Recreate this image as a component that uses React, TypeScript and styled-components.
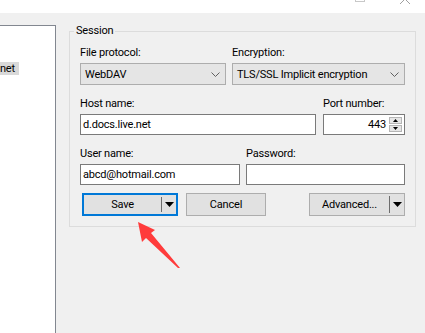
import React from "react";
import styled, { createGlobalStyle } from "styled-components";

const FONT = `Roboto, "Noto Sans", sans-serif`;

const GlobalStyle = createGlobalStyle`
  html, body {
    margin: 0;
    padding: 0;
  }
  body {
    width: 425px;
    height: 333px;
    overflow: hidden;
    background: #f0f0f0;
    font-family: ${FONT};
    font-size: 11px;
    letter-spacing: -0.2px;
    color: #000;
  }
`;

const Window = styled.div`
  position: relative;
  width: 425px;
  height: 333px;
  display: flex;
  flex-direction: column;
  overflow: hidden;
`;

const TitleBar = styled.div`
  height: 14px;
  background: #fff;
  display: flex;
  justify-content: flex-end;
  align-items: flex-start;
  gap: 35px;
  padding-right: 15px;
  overflow: hidden;
`;

const CaptionGlyph = styled.svg<{ $lift: number }>`
  width: 10px;
  height: 10px;
  margin-top: -${({ $lift }) => $lift}px;
  flex: none;
`;

const Body = styled.div`
  flex: 1;
  display: flex;
  align-items: flex-start;
  background: #f0f0f0;
`;

const TreePanel = styled.div`
  width: 55px;
  height: 307px;
  margin-top: 12px;
  background: #fff;
  border-top: 1px solid #828790;
  border-right: 1px solid #828790;
  overflow: hidden;
  flex: none;
`;

const TreeItem = styled.div`
  display: inline-block;
  margin-top: 36px;
  padding: 0 4px 0 0;
  line-height: 13px;
  background: #d9d9d9;
  white-space: nowrap;
`;

const GroupBox = styled.fieldset`
  width: 347px;
  box-sizing: border-box;
  margin: 10px 0 0 13px;
  padding: 6px 10px 10px 10px;
  border: 1px solid #dcdcdc;
  min-width: 0;
  flex: none;
`;

const Legend = styled.legend`
  padding: 0 2px;
  margin-left: -6px;
  line-height: 16px;
`;

const Row = styled.div<{ $cols: string; $gap: number; $mb: number }>`
  display: grid;
  grid-template-columns: ${({ $cols }) => $cols};
  column-gap: ${({ $gap }) => $gap}px;
  margin-bottom: ${({ $mb }) => $mb}px;
`;

const Field = styled.div`
  display: flex;
  flex-direction: column;
  min-width: 0;
`;

const Label = styled.label`
  line-height: 16px;
  margin-bottom: 2px;
  white-space: nowrap;
`;

const Combo = styled.div`
  height: 22px;
  box-sizing: border-box;
  border: 1px solid #adadad;
  background: #e5e5e5;
  display: flex;
  align-items: center;
  padding: 0 5px 0 4px;
  white-space: nowrap;
`;

const ComboText = styled.span`
  flex: 1;
`;

const TextBox = styled.div<{ $align?: string }>`
  height: 21px;
  box-sizing: border-box;
  border: 1px solid #7a7a7a;
  background: #fff;
  display: flex;
  align-items: center;
  justify-content: ${({ $align }) => ($align === "right" ? "flex-end" : "flex-start")};
  padding: 0 2px;
  white-space: nowrap;
`;

const SpinStack = styled.div`
  display: flex;
  flex-direction: column;
  margin-left: 3px;
`;

const SpinPart = styled.div`
  width: 13px;
  height: 7px;
  box-sizing: border-box;
  border: 1px solid #b5b5b5;
  background: #e6e6e6;
  display: flex;
  align-items: center;
  justify-content: center;
  & + & {
    margin-top: 1px;
  }
`;

const ButtonRow = styled.div`
  display: flex;
  align-items: center;
`;

const Button = styled.div<{ $w: number; $focused?: boolean; $ml?: number }>`
  width: ${({ $w }) => $w}px;
  height: 23px;
  box-sizing: border-box;
  margin-left: ${({ $ml }) => $ml ?? 0}px;
  border: ${({ $focused }) => ($focused ? "2px solid #0078d7" : "1px solid #adadad")};
  background: #e1e1e1;
  display: flex;
  align-items: stretch;
  flex: none;
`;

const ButtonLabel = styled.span`
  flex: 1;
  display: flex;
  align-items: center;
  justify-content: center;
`;

const SplitLine = styled.span`
  width: 1px;
  margin: 2px 0;
  background: #6d6d6d;
`;

const DropPart = styled.span`
  width: 14px;
  display: flex;
  align-items: center;
  justify-content: center;
`;

const Overlay = styled.svg`
  position: absolute;
  left: 0;
  top: 0;
  width: 425px;
  height: 333px;
  pointer-events: none;
`;

const Chevron = () => (
  <svg width="9" height="5" viewBox="0 0 9 5">
    <path d="M0.5 0.5 L4.5 4.5 L8.5 0.5" fill="none" stroke="#606060" strokeWidth="1" />
  </svg>
);

const DropTriangle = () => (
  <svg width="9" height="5" viewBox="0 0 9 5">
    <path d="M0 0 H9 L4.5 5 Z" fill="#000" />
  </svg>
);

const SpinArrow = ({ up }: { up?: boolean }) => (
  <svg width="5" height="3" viewBox="0 0 5 3">
    <path d={up ? "M0 3 H5 L2.5 0 Z" : "M0 0 H5 L2.5 3 Z"} fill="#000" />
  </svg>
);

export default function App() {
  return (
    <>
      <GlobalStyle />
      <Window>
        <TitleBar>
          <CaptionGlyph $lift={8} viewBox="0 0 10 10">
            <rect x="0.5" y="0.5" width="9" height="9" fill="none" stroke="#c8c8c8" />
          </CaptionGlyph>
          <CaptionGlyph $lift={6} viewBox="0 0 10 10">
            <path d="M0 0 L10 10 M10 0 L0 10" stroke="#a0a0a0" strokeWidth="1" />
          </CaptionGlyph>
        </TitleBar>
        <Body>
          <TreePanel>
            <TreeItem>net</TreeItem>
          </TreePanel>
          <GroupBox>
            <Legend>Session</Legend>
            <Row $cols="146px 1fr" $gap={6} $mb={11}>
              <Field>
                <Label>File protocol:</Label>
                <Combo>
                  <ComboText>WebDAV</ComboText>
                  <Chevron />
                </Combo>
              </Field>
              <Field>
                <Label>Encryption:</Label>
                <Combo>
                  <ComboText>TLS/SSL Implicit encryption</ComboText>
                  <Chevron />
                </Combo>
              </Field>
            </Row>
            <Row $cols="1fr 82px" $gap={7} $mb={11}>
              <Field>
                <Label>Host name:</Label>
                <TextBox>d.docs.live.net</TextBox>
              </Field>
              <Field>
                <Label>Port number:</Label>
                <TextBox $align="right">
                  443
                  <SpinStack>
                    <SpinPart>
                      <SpinArrow up />
                    </SpinPart>
                    <SpinPart>
                      <SpinArrow />
                    </SpinPart>
                  </SpinStack>
                </TextBox>
              </Field>
            </Row>
            <Row $cols="160px 1fr" $gap={6} $mb={8}>
              <Field>
                <Label>User name:</Label>
                <TextBox>abcd@hotmail.com</TextBox>
              </Field>
              <Field>
                <Label>Password:</Label>
                <TextBox />
              </Field>
            </Row>
            <ButtonRow>
              <Button $w={96} $ml={2} $focused>
                <ButtonLabel>Save</ButtonLabel>
                <SplitLine />
                <DropPart>
                  <DropTriangle />
                </DropPart>
              </Button>
              <Button $w={80} $ml={8}>
                <ButtonLabel>Cancel</ButtonLabel>
              </Button>
              <Button $w={96} $ml={43}>
                <ButtonLabel>Advanced...</ButtonLabel>
                <SplitLine />
                <DropPart>
                  <DropTriangle />
                </DropPart>
              </Button>
            </ButtonRow>
          </GroupBox>
        </Body>
        <Overlay viewBox="0 0 425 333">
          <polygon
            points="138,222 155,230 151,233 180,268 178,268 146,238 142,242"
            fill="#ff3b3b"
          />
        </Overlay>
      </Window>
    </>
  );
}
